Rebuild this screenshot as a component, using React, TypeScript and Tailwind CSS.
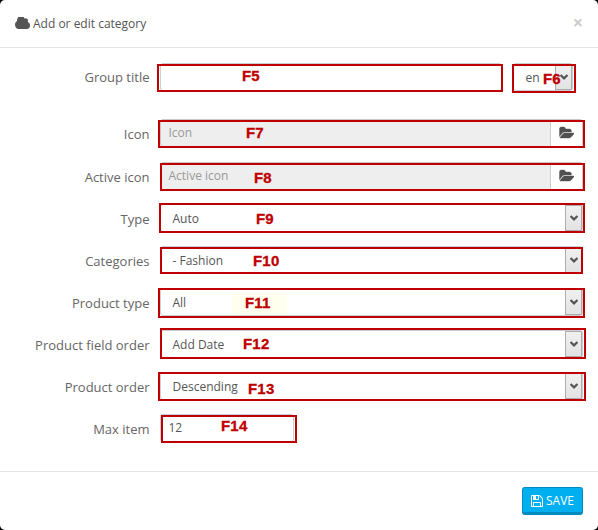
import type { ReactNode } from 'react';

function CloudIcon() {
  return (
    <svg className="-mt-px h-[12px] w-[15px] shrink-0" viewBox="64 256 1920 1280" preserveAspectRatio="none" fill="#555">
      <path d="M1984 1152q0 159-112.5 271.5t-271.5 112.5h-1088q-185 0-316.5-131.5t-131.5-316.5q0-132 71-241.5t187-163.5q-2-28-2-43 0-212 150-362t362-150q158 0 286.5 88t187.500 230q70-62 166-62 106 0 181 75t75 181q0 75-41 138 129 30 213 134.500t84 239.500z" />
    </svg>
  );
}

function FolderIcon() {
  return (
    <svg className="-mt-px h-[14px] w-[15px]" viewBox="0 0 1944 1792" preserveAspectRatio="none" fill="#505050" stroke="#505050" strokeWidth="50">
      <path d="M1943 952q0 31-31 66l-336 396q-43 51-120.500 86.500t-143.500 35.500h-1088q-34 0-60.500-13t-26.500-43q0-31 31-66l336-396q43-51 120.500-86.500t143.500-35.500h1088q34 0 60.500 13t26.500 43zm-343-344v160h-832q-94 0-197 47.500t-164 119.500l-337 396-5 6q0-4-.5-12.500t-.5-12.500v-960q0-92 66-158t158-66h320q92 0 158 66t66 158v32h544q92 0 158 66t66 158z" />
    </svg>
  );
}

function SaveIcon() {
  return (
    <svg className="h-3 w-3" viewBox="128 128 1536 1536" fill="white">
      <path d="M512 1536h768v-384h-768v384zm896 0h128v-896q0-14-10-38.500t-20-34.500l-281-281q-10-10-34-20t-39-10v416q0 40-28 68t-68 28h-576q-40 0-68-28t-28-68v-416h-128v1280h128v-416q0-40 28-68t68-28h832q40 0 68 28t28 68v416zm-384-928v-320q0-13-9.500-22.500t-22.500-9.500h-192q-13 0-22.500 9.500t-9.500 22.500v320q0 13 9.500 22.500t22.500 9.500h192q13 0 22.500-9.500t9.500-22.500zm640 32v928q0 40-28 68t-68 28h-1344q-40 0-68-28t-28-68v-1344q0-40 28-68t68-28h928q40 0 88 20t76 48l280 280q28 28 48 76t20 88z" />
    </svg>
  );
}

function Arrow() {
  return (
    <span className="flex w-[17px] shrink-0 items-center justify-center border border-[#adadad] bg-gradient-to-b from-[#f0f0f0] to-[#e3e3e3]">
      <svg className="h-[6px] w-2" viewBox="0 0 8 6" fill="none" stroke="#555" strokeWidth="2.2">
        <path d="M.5 1 4 4.400 7.500 1" />
      </svg>
    </span>
  );
}

function Row({ label, className = 'h-[42px]', children }: { label: string; className?: string; children: ReactNode }) {
  return (
    <div className={`flex items-start ${className}`}>
      <div className="mr-[10.5px] w-[149.5px] shrink-0 text-right text-[13px] leading-[30px] text-[#666]">{label}</div>
      {children}
    </div>
  );
}

function Select({ value, width = 'w-[423px]' }: { value: string; width?: string }) {
  return (
    <div className={`flex h-7 rounded-[3px] border border-[#c7d0d4] bg-white ${width}`}>
      <span className="grow pl-[11.5px] text-[12px] leading-[28px] text-[#555]">{value}</span>
      <Arrow />
    </div>
  );
}

function FileInput({ placeholder }: { placeholder: string }) {
  return (
    <div className="flex h-[28px] w-[423px] rounded-[3px] border border-[#c7c7c7] bg-[#eee]">
      <span className="grow pl-[7.5px] text-[12px] leading-[26px] text-[#999]">{placeholder}</span>
      <span className="flex w-8 items-center justify-center border-l border-[#ccc] bg-white">
        <FolderIcon />
      </span>
    </div>
  );
}

const frames = [
  'left-[157px] top-[64px] w-[346px] h-[28px]',
  'left-[512px] top-[64px] w-[64px] h-[29px]',
  'left-[158px] top-[120px] w-[427px] h-[28px]',
  'left-[160px] top-[163px] w-[425px] h-[28px]',
  'left-[159px] top-[203px] w-[426px] h-[30px]',
  'left-[160px] top-[247px] w-[423px] h-[27px]',
  'left-[158px] top-[288px] w-[427px] h-[30px]',
  'left-[160px] top-[328px] w-[426px] h-[31px]',
  'left-[158px] top-[372px] w-[428px] h-[29px]',
  'left-[161px] top-[415px] w-[136px] h-[28px]',
];

const tags = [
  ['F5', 'left-[242px] top-[68px]'],
  ['F6', 'left-[543px] top-[71px]'],
  ['F7', 'left-[246px] top-[125px]'],
  ['F8', 'left-[254px] top-[170px]'],
  ['F9', 'left-[256px] top-[211px]'],
  ['F10', 'left-[253px] top-[253px]'],
  ['F11', 'left-[245px] top-[295px]'],
  ['F12', 'left-[243px] top-[336px]'],
  ['F13', 'left-[248px] top-[381px]'],
  ['F14', 'left-[221px] top-[418px]'],
];

export default function App() {
  return (
    <div className="relative h-[530px] w-[598px] overflow-hidden bg-black font-['Open_Sans','Noto_Sans',sans-serif]">
      <div className="flex h-full flex-col rounded-[5px] bg-white">
        <header className="flex h-12 items-center justify-between border-b border-[#e5e5e5] pl-[15px] pr-[15px]">
          <h1 className="flex items-center gap-[3px] text-[12px] leading-[18px] text-[#555]">
            <CloudIcon />
            Add or edit category
          </h1>
          <button className="pb-[3px] text-[18px] font-bold leading-none text-[#ccc]">×</button>
        </header>
        <main className="h-[423px] pt-[14px]">
          <Row label="Group title" className="h-[57px]">
            <div className="mr-[11px] mt-px h-7 w-[342px] rounded-[3px] border border-[#c7d0d4]" />
            <div className="mt-px flex">
              <Select value="en" width="w-[60px]" />
            </div>
          </Row>
          <Row label="Icon" className="h-[43px]">
            <FileInput placeholder="Icon" />
          </Row>
          <Row label="Active icon">
            <FileInput placeholder="Active icon" />
          </Row>
          <Row label="Type"><Select value="Auto" /></Row>
          <Row label="Categories"><Select value="- Fashion" /></Row>
          <Row label="Product type"><Select value="All" /></Row>
          <Row label="Product field order"><Select value="Add Date" /></Row>
          <Row label="Product order"><Select value="Descending" /></Row>
          <Row label="Max item">
            <div className="h-7 w-[134px] rounded-[3px] border border-[#c7d0d4] pl-[7.5px] text-[12px] leading-[26px] text-[#555]">12</div>
          </Row>
        </main>
        <footer className="flex grow justify-end border-t border-[#e5e5e5] pr-[15px] pt-[15px]">
          <button className="flex h-[28px] w-[61px] items-center justify-center gap-[3px] rounded-[3px] border border-b-[3px] border-[#008abd] bg-[#00aff0] pt-[2px] text-[12px] leading-none text-white">
            <SaveIcon />
            SAVE
          </button>
        </footer>
      </div>
      <div className="absolute left-[232px] top-[293px] h-[22px] w-[55px] bg-[#fffff0]" />
      {frames.map((box) => (
        <div key={box} className={`absolute border-2 border-[#c00000] ${box}`} />
      ))}
      {tags.map(([text, place]) => (
        <span key={text} className={`absolute origin-left scale-x-[1.07] font-['Liberation_Sans',Arial,sans-serif] text-[14px] font-bold leading-4 tracking-[0.2px] text-[#c00000] [-webkit-text-stroke:0.3px_#c00000] ${place}`}>
          {text}
        </span>
      ))}
    </div>
  );
}
